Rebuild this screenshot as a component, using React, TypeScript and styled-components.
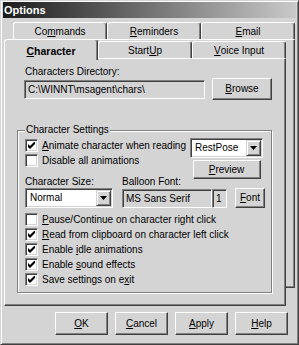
import React from 'react';
import styled, { createGlobalStyle, css } from 'styled-components';

const FACE = '#d4d4d4';
const LIGHT = '#ffffff';
const SHADOW = '#808080';
const DARK = '#404040';

const GlobalStyle = createGlobalStyle`
  html, body { margin: 0; padding: 0; background: ${FACE}; }
  body {
    font-family: "Liberation Sans", Arial, sans-serif;
    font-size: 10px;
    color: #000;
  }
  * { box-sizing: border-box; }
`;

const Window = styled.div`
  width: 299px;
  height: 345px;
  background: ${FACE};
  border: 1px solid;
  border-color: ${FACE} ${DARK} ${DARK} ${FACE};
  box-shadow: inset 1px 1px 0 ${LIGHT}, inset -1px -1px 0 ${SHADOW};
  padding: 1px 2px 2px 2px;
  display: flex;
  flex-direction: column;
`;

const TitleBar = styled.div`
  height: 16px;
  flex: none;
  background: linear-gradient(to right, #1c1c1c 0%, #6a6a6a 45%, #c9c9c9 100%);
  color: #fff;
  font-weight: 700;
  font-size: 11px;
  line-height: 16px;
  padding-left: 1px;
`;

const TabControl = styled.div`
  display: grid;
  margin: 4px 0 0 1px;
  width: 291px;
`;

const BackLayer = styled.div`
  grid-area: 1 / 1;
  margin-left: 9px;
  display: flex;
  flex-direction: column;
  align-self: start;
`;

const FrontLayer = styled.div`
  grid-area: 1 / 1;
  margin-top: 17px;
  margin-right: 9px;
  display: flex;
  flex-direction: column;
`;

const TabRow = styled.div<{ $h: number }>`
  display: flex;
  align-items: flex-end;
  height: ${p => p.$h}px;
`;

const Tab = styled.div<{ $active?: boolean }>`
  width: 94px;
  flex: none;
  height: ${p => (p.$active ? 21 : 17)}px;
  display: flex;
  justify-content: center;
  align-items: flex-start;
  padding-top: ${p => (p.$active ? 5 : 3)}px;
  background: ${FACE};
  border-top: 1px solid ${LIGHT};
  border-left: 1px solid ${LIGHT};
  border-right: 1px solid ${DARK};
  border-radius: 3px 3px 0 0;
  box-shadow: inset -1px 0 0 ${SHADOW};
  line-height: 12px;
  white-space: nowrap;
  ${p =>
    p.$active &&
    css`
      font-weight: 700;
      font-size: 10.5px;
      position: relative;
      z-index: 2;
      margin-bottom: -2px;
    `}
`;

const BackSheet = styled.div`
  height: 249px;
  background: ${FACE};
  border: 1px solid;
  border-color: ${LIGHT} ${DARK} ${DARK} ${LIGHT};
  box-shadow: inset -1px -1px 0 ${SHADOW};
`;

const Panel = styled.div`
  height: 248px;
  background: ${FACE};
  border: 1px solid;
  border-color: ${LIGHT} ${DARK} ${DARK} ${LIGHT};
  box-shadow: inset -1px -1px 0 ${SHADOW};
  padding: 7px 13px 0 12px;
  display: flex;
  flex-direction: column;
`;

const DirSection = styled.div`
  margin-left: 7px;
  display: flex;
  flex-direction: column;
`;

const Label = styled.div`
  line-height: 12px;
  height: 12px;
  padding-left: 1px;
  white-space: nowrap;
`;

const DirRow = styled.div`
  display: flex;
  align-items: center;
  gap: 7px;
  height: 22px;
`;

const Field = styled.div<{ $w?: number; $h?: number; $ml?: number }>`
  ${p => (p.$w ? css`width: ${p.$w}px; flex: none;` : css`flex: 1;`)}
  height: ${p => p.$h ?? 19}px;
  margin-left: ${p => p.$ml ?? 0}px;
  background: ${FACE};
  border: 1px solid;
  border-color: ${SHADOW} ${LIGHT} ${LIGHT} ${SHADOW};
  box-shadow: inset 1px 1px 0 ${DARK}, inset -1px -1px 0 ${FACE};
  padding: 0 2px 0 3px;
  display: flex;
  align-items: center;
  white-space: nowrap;
  overflow: hidden;
`;

const Button = styled.button<{ $w: number; $h: number; $ml?: number }>`
  width: ${p => p.$w}px;
  height: ${p => p.$h}px;
  flex: none;
  margin: 0 0 0 ${p => p.$ml ?? 0}px;
  padding: 0;
  font: inherit;
  font-size: 10px;
  line-height: 12px;
  color: #000;
  background: ${FACE};
  border: 1px solid;
  border-color: ${LIGHT} ${DARK} ${DARK} ${LIGHT};
  box-shadow: inset -1px -1px 0 ${SHADOW};
  display: flex;
  align-items: center;
  justify-content: center;
`;

const U = styled.span`
  text-decoration: underline;
  text-underline-offset: 1px;
`;

const Group = styled.fieldset`
  margin: 24px 0 0 0;
  padding: 2px 6px 6px 7px;
  border: 1px solid ${SHADOW};
  box-shadow: 1px 1px 0 ${LIGHT}, inset 1px 1px 0 ${LIGHT};
  min-inline-size: 0;
`;

const Legend = styled.legend`
  padding: 0 1px;
  line-height: 12px;
  background: ${FACE};
`;

const TopBlock = styled.div`
  display: flex;
  justify-content: space-between;
  align-items: flex-start;
`;

const LeftCol = styled.div`
  display: flex;
  flex-direction: column;
  padding-top: 1px;
  gap: 2px;
`;

const RightCol = styled.div`
  width: 73px;
  margin-right: 2px;
  display: flex;
  flex-direction: column;
  align-items: center;
  gap: 2px;
`;

const CheckRow = styled.div`
  display: flex;
  align-items: center;
  gap: 4px;
  height: 13px;
  line-height: 12px;
  white-space: nowrap;
`;

const Box = styled.span`
  width: 13px;
  height: 13px;
  flex: none;
  background: #fff;
  border: 1px solid;
  border-color: ${SHADOW} ${LIGHT} ${LIGHT} ${SHADOW};
  box-shadow: inset 1px 1px 0 ${DARK}, inset -1px -1px 0 ${FACE};
  display: flex;
  align-items: center;
  justify-content: center;
`;

const LabelRow = styled.div`
  display: grid;
  grid-template-columns: 97px 1fr;
  margin-top: 7px;
  line-height: 12px;
  white-space: nowrap;
`;

const FontRow = styled.div`
  display: flex;
  align-items: center;
  height: 20px;
`;

const Combo = styled.div<{ $w: number }>`
  width: ${p => p.$w}px;
  height: 20px;
  flex: none;
  display: flex;
  background: #fff;
  border: 1px solid;
  border-color: ${SHADOW} ${LIGHT} ${LIGHT} ${SHADOW};
  box-shadow: inset 1px 1px 0 ${DARK}, inset -1px -1px 0 ${FACE};
  padding: 1px;
`;

const ComboText = styled.span`
  flex: 1;
  padding-left: 3px;
  line-height: 16px;
  white-space: nowrap;
`;

const ComboArrow = styled.span`
  width: 15px;
  flex: none;
  background: ${FACE};
  border: 1px solid;
  border-color: ${FACE} ${DARK} ${DARK} ${FACE};
  box-shadow: inset 1px 1px 0 ${LIGHT}, inset -1px -1px 0 ${SHADOW};
  display: flex;
  align-items: center;
  justify-content: center;
`;

const Checks = styled.div`
  display: flex;
  flex-direction: column;
  gap: 2px;
  margin-top: 5px;
`;

const ButtonBar = styled.div`
  display: flex;
  justify-content: flex-end;
  gap: 7px;
  margin-top: 6px;
  padding-right: 8px;
`;

const Check = ({ on }: { on?: boolean }) => (
  <Box>
    {on && (
      <svg width="7" height="7" viewBox="0 0 7 7">
        <path d="M0 2 L2 4 L6 0 L7 0 L7 2 L2.5 6.5 L2 7 L0 5 Z" fill="#000" />
      </svg>
    )}
  </Box>
);

const Arrow = () => (
  <svg width="7" height="4" viewBox="0 0 7 4">
    <path d="M0 0 H7 L3.5 4 Z" fill="#000" />
  </svg>
);

const Dropdown = ({ w, text }: { w: number; text: string }) => (
  <Combo $w={w}>
    <ComboText>{text}</ComboText>
    <ComboArrow>
      <Arrow />
    </ComboArrow>
  </Combo>
);

export default function App() {
  return (
    <>
      <GlobalStyle />
      <Window>
        <TitleBar>Options</TitleBar>
        <TabControl>
          <BackLayer>
            <TabRow $h={17}>
              <Tab>Co<U>m</U>mands</Tab>
              <Tab><U>R</U>eminders</Tab>
              <Tab><U>E</U>mail</Tab>
            </TabRow>
            <BackSheet />
          </BackLayer>
          <FrontLayer>
            <TabRow $h={19}>
              <Tab $active><U>C</U>haracter</Tab>
              <Tab>Start<U>U</U>p</Tab>
              <Tab><U>V</U>oice Input</Tab>
            </TabRow>
            <Panel>
              <DirSection>
                <Label>Characters Directory:</Label>
                <DirRow>
                  <Field>{'C:\\WINNT\\msagent\\chars\\'}</Field>
                  <Button $w={60} $h={22}><U>B</U>rowse</Button>
                </DirRow>
              </DirSection>
              <Group>
                <Legend>Character Settings</Legend>
                <TopBlock>
                  <LeftCol>
                    <CheckRow>
                      <Check on />
                      <span><U>A</U>nimate character when reading</span>
                    </CheckRow>
                    <CheckRow>
                      <Check />
                      <span>Disable all animations</span>
                    </CheckRow>
                    <LabelRow>
                      <span>Character Size:</span>
                      <span>Balloon Font:</span>
                    </LabelRow>
                  </LeftCol>
                  <RightCol>
                    <Dropdown w={73} text="RestPose" />
                    <Button $w={68} $h={19}><U>P</U>review</Button>
                  </RightCol>
                </TopBlock>
                <FontRow>
                  <Dropdown w={88} text="Normal" />
                  <Field $w={90} $h={19} $ml={9}>MS Sans Serif</Field>
                  <Field $w={15} $h={19}>1</Field>
                  <Button $w={30} $h={20} $ml={8}><U>F</U>ont</Button>
                </FontRow>
                <Checks>
                  <CheckRow>
                    <Check />
                    <span><U>P</U>ause/Continue on character right click</span>
                  </CheckRow>
                  <CheckRow>
                    <Check on />
                    <span><U>R</U>ead from clipboard on character left click</span>
                  </CheckRow>
                  <CheckRow>
                    <Check on />
                    <span>Enable <U>i</U>dle animations</span>
                  </CheckRow>
                  <CheckRow>
                    <Check on />
                    <span>Enable <U>s</U>ound effects</span>
                  </CheckRow>
                  <CheckRow>
                    <Check on />
                    <span>Save settings on e<U>x</U>it</span>
                  </CheckRow>
                </Checks>
              </Group>
            </Panel>
          </FrontLayer>
        </TabControl>
        <ButtonBar>
          <Button $w={53} $h={23}><U>O</U>K</Button>
          <Button $w={53} $h={23}><U>C</U>ancel</Button>
          <Button $w={53} $h={23}><U>A</U>pply</Button>
          <Button $w={53} $h={23}><U>H</U>elp</Button>
        </ButtonBar>
      </Window>
    </>
  );
}
